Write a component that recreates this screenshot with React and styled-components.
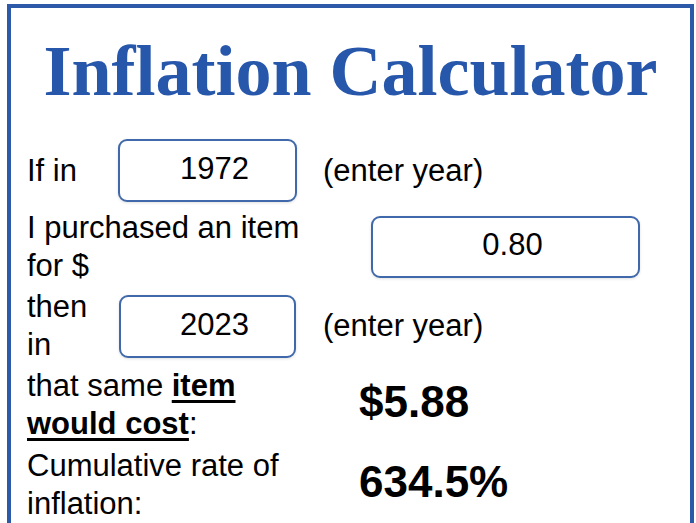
import React from "react";
import styled, { createGlobalStyle } from "styled-components";

const GlobalStyle = createGlobalStyle`
  html, body {
    margin: 0;
    padding: 0;
    background: #ffffff;
  }
  body {
    font-family: "Liberation Sans", Arial, sans-serif;
    color: #000;
  }
`;

const Frame = styled.div`
  box-sizing: border-box;
  margin: 4px 2px 0 7px;
  min-height: 600px;
  border: 4px solid #2c5aa9;
  border-bottom: none;
  padding-top: 27px;
  background: #fff;
`;

const Title = styled.h1`
  margin: 0;
  font-family: "Liberation Serif", "Times New Roman", serif;
  font-weight: 700;
  font-size: 72px;
  line-height: 72px;
  color: #2757ab;
  text-align: center;
  white-space: nowrap;
`;

const Form = styled.div`
  margin-top: 32px;
  padding-left: 16px;
  display: flex;
  flex-direction: column;
  gap: 3px;
`;

const Row = styled.div`
  display: flex;
  align-items: center;
  margin-top: ${(p) => p.$mt || 0}px;
`;

const Label = styled.div`
  flex: none;
  width: ${(p) => p.$w}px;
  font-size: 31px;
  line-height: 38px;
`;

const Strong = styled.span`
  font-weight: 700;
  text-decoration: underline;
  text-decoration-thickness: 3px;
  text-underline-offset: 4px;
`;

const Field = styled.div`
  flex: none;
  box-sizing: border-box;
  width: ${(p) => p.$w}px;
  height: ${(p) => p.$h}px;
  border: 2px solid #4069ab;
  border-radius: 9px;
  box-shadow: 0 1px 3px rgba(0, 0, 0, 0.12);
  padding: 0 0 4px 14px;
  font-size: 31px;
  line-height: ${(p) => p.$h - 8}px;
  text-align: center;
  background: #fff;
`;

const Hint = styled.div`
  margin-left: ${(p) => p.$ml}px;
  font-size: 31px;
  line-height: 38px;
  white-space: nowrap;
`;

const Value = styled.div`
  font-size: 44px;
  line-height: 44px;
  font-weight: 700;
  margin-bottom: 6px;
  white-space: nowrap;
`;

export default function App() {
  return (
    <>
      <GlobalStyle />
      <Frame>
        <Title>Inflation Calculator</Title>
        <Form>
          <Row>
            <Label $w={91}>If in</Label>
            <Field $w={179} $h={63}>1972</Field>
            <Hint $ml={26}>(enter year)</Hint>
          </Row>
          <Row $mt={4}>
            <Label $w={344}>
              I purchased an item
              <br />
              for $
            </Label>
            <Field $w={269} $h={62}>0.80</Field>
          </Row>
          <Row>
            <Label $w={92}>
              then
              <br />
              in
            </Label>
            <Field $w={177} $h={63}>2023</Field>
            <Hint $ml={27}>(enter year)</Hint>
          </Row>
          <Row>
            <Label $w={332}>
              that same <Strong>item</Strong>
              <br />
              <Strong>would cost</Strong>:
            </Label>
            <Value>$5.88</Value>
          </Row>
          <Row $mt={1}>
            <Label $w={332}>
              Cumulative rate of
              <br />
              inflation:
            </Label>
            <Value>634.5%</Value>
          </Row>
        </Form>
      </Frame>
    </>
  );
}
